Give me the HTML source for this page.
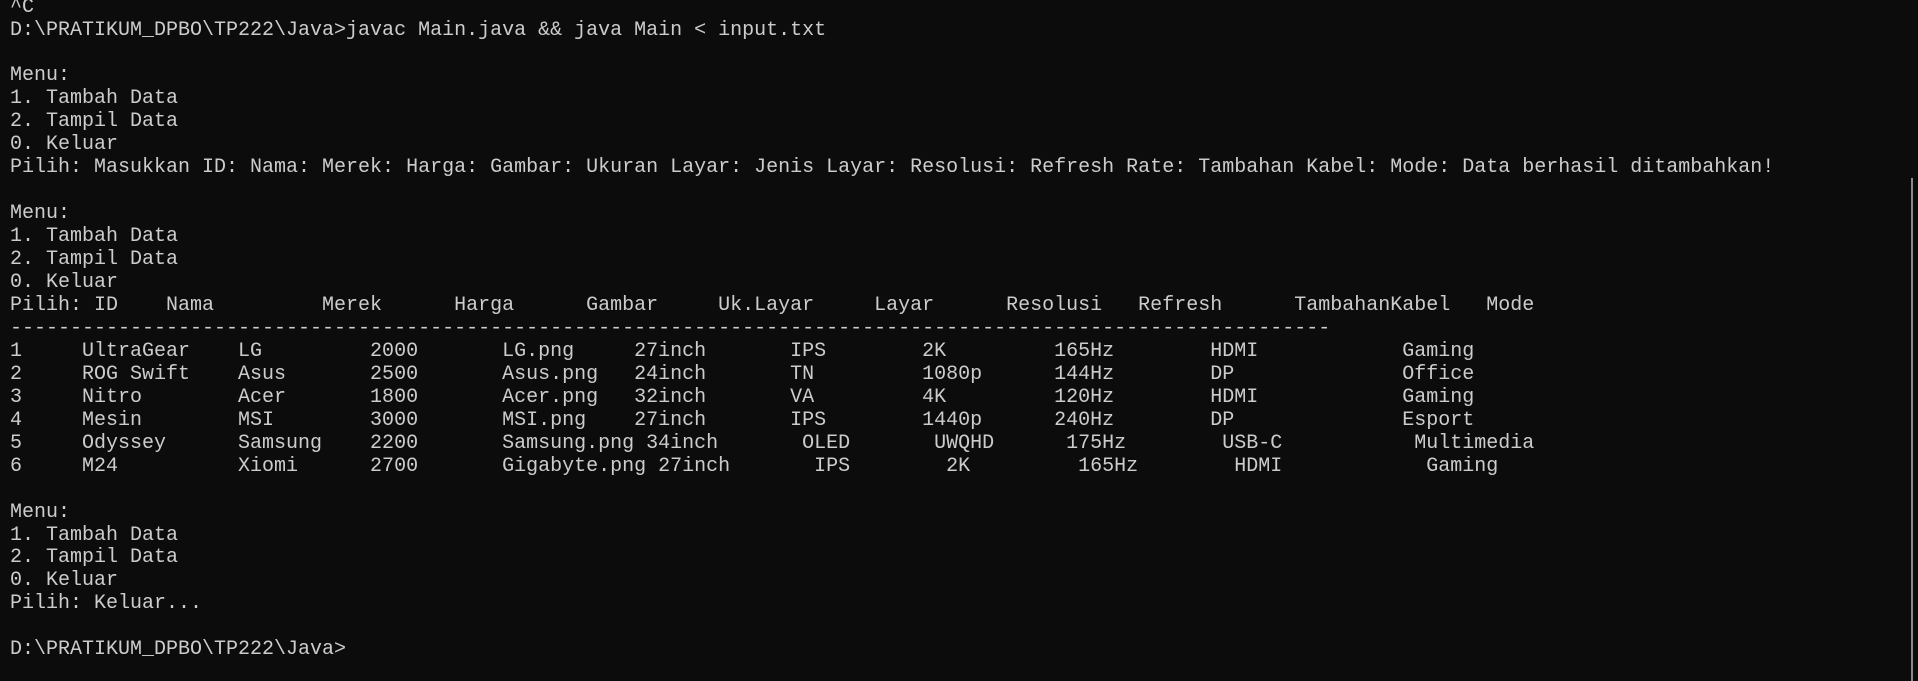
<!DOCTYPE html>
<html><head><meta charset="utf-8"><style>
html,body{margin:0;padding:0;background:#0c0c0c;width:1918px;height:681px;overflow:hidden;position:relative}
pre{margin:0;position:absolute;left:10px;top:-3.4px;font-family:"Liberation Mono",monospace;font-size:20px;line-height:22.96px;color:#cccccc;white-space:pre}
.sb{position:absolute;left:1911px;top:178px;width:2px;height:503px;background:#8a8a8a}
</style></head><body>
<pre>^C
D:\PRATIKUM_DPBO\TP222\Java&gt;javac Main.java &amp;&amp; java Main &lt; input.txt

Menu:
1. Tambah Data
2. Tampil Data
0. Keluar
Pilih: Masukkan ID: Nama: Merek: Harga: Gambar: Ukuran Layar: Jenis Layar: Resolusi: Refresh Rate: Tambahan Kabel: Mode: Data berhasil ditambahkan!

Menu:
1. Tambah Data
2. Tampil Data
0. Keluar
Pilih: ID    Nama         Merek      Harga      Gambar     Uk.Layar     Layar      Resolusi   Refresh      TambahanKabel   Mode
--------------------------------------------------------------------------------------------------------------
1     UltraGear    LG         2000       LG.png     27inch       IPS        2K         165Hz        HDMI            Gaming
2     ROG Swift    Asus       2500       Asus.png   24inch       TN         1080p      144Hz        DP              Office
3     Nitro        Acer       1800       Acer.png   32inch       VA         4K         120Hz        HDMI            Gaming
4     Mesin        MSI        3000       MSI.png    27inch       IPS        1440p      240Hz        DP              Esport
5     Odyssey      Samsung    2200       Samsung.png 34inch       OLED       UWQHD      175Hz        USB-C           Multimedia
6     M24          Xiomi      2700       Gigabyte.png 27inch       IPS        2K         165Hz        HDMI            Gaming

Menu:
1. Tambah Data
2. Tampil Data
0. Keluar
Pilih: Keluar...

D:\PRATIKUM_DPBO\TP222\Java&gt;</pre>
<div class="sb"></div>
</body></html>
